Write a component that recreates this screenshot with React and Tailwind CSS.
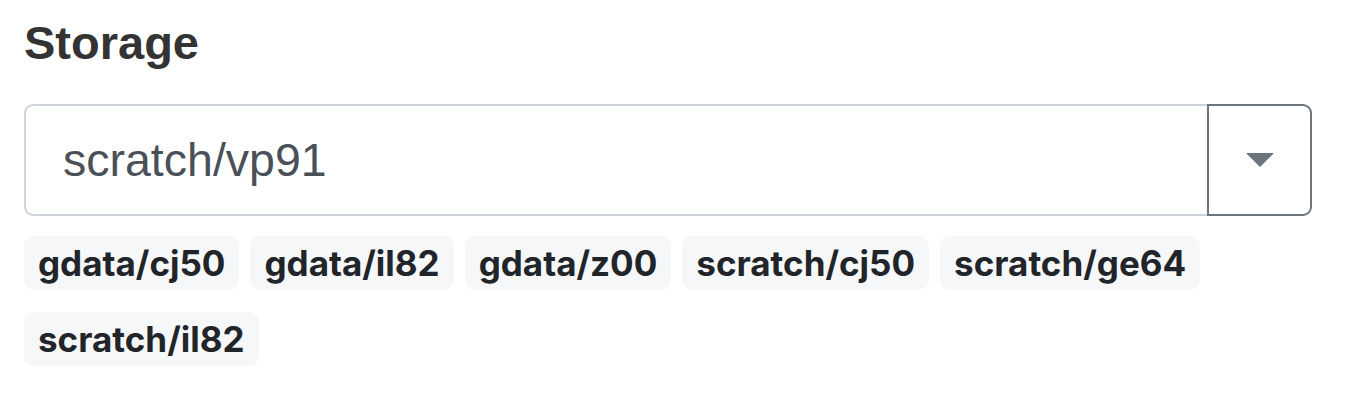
import { useState } from "react";

const storages = [
  "gdata/cj50",
  "gdata/il82",
  "gdata/z00",
  "scratch/cj50",
  "scratch/ge64",
  "scratch/il82",
];

function StorageBadge({ name, onPick }) {
  return (
    <button
      type="button"
      onClick={() => onPick(name)}
      className="h-[54px] flex items-center px-[14px] rounded-[10px] bg-[#f6f7f9] text-[#212529] text-[35px] font-bold leading-none"
      style={{ fontFamily: "Inter, 'Noto Sans', sans-serif" }}
    >
      {name}
    </button>
  );
}

export default function App() {
  const [value, setValue] = useState("scratch/vp91");

  return (
    <div className="bg-white w-[1372px] h-[402px] pl-6 pt-[15px]">
      <h2
        className="text-[47px] font-bold leading-[1.2] text-[#333333] mb-[33px]"
        style={{ fontFamily: "'Liberation Sans', Arial, sans-serif" }}
      >
        Storage
      </h2>

      <div className="flex w-[1288px] h-[112px]">
        <div
          className="flex-1 flex items-center pl-[37px] border-2 border-r-0 border-[#ced4da] rounded-l-[9px] text-[46.5px] text-[#495057]"
          style={{ fontFamily: "'Liberation Sans', Arial, sans-serif" }}
        >
          {value}
        </div>
        <button
          type="button"
          className="w-[105px] flex items-center justify-center border-2 border-[#6c757d] rounded-r-[9px]"
        >
          <svg width="28" height="14" viewBox="0 0 28 14">
            <path d="M0 0 L28 0 L14 14 Z" fill="#6c757d" />
          </svg>
        </button>
      </div>

      <div className="flex flex-wrap gap-x-[11px] gap-y-[22px] w-[1288px] mt-5">
        {storages.map((s) => (
          <StorageBadge key={s} name={s} onPick={setValue} />
        ))}
      </div>
    </div>
  );
}
